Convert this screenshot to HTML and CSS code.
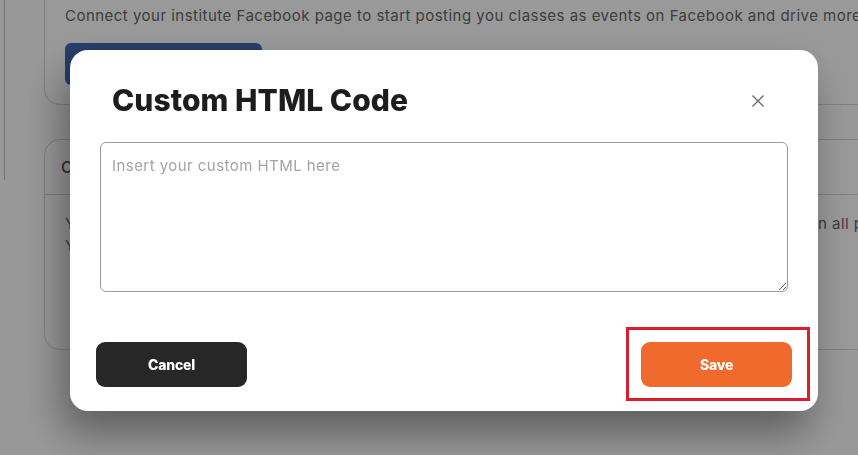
FILE: index.html
```html
<!DOCTYPE html>
<html lang="en">
<head>
<meta charset="utf-8">
<title>Custom HTML Code</title>
<link rel="stylesheet" href="styles.css">
</head>
<body>
<div class="page">
  <aside class="sidebar"></aside>
  <main class="main">
    <section class="card card-top">
      <p class="card-text">Connect your institute Facebook page to start posting you classes as events on Facebook and drive more</p>
      <button class="fb-btn" type="button">Connect Facebook</button>
    </section>
    <section class="card card-code">
      <header class="card-head">Custom HTML Code</header>
      <div class="card-body">
        <p class="line"><span class="lead">Your custom HTML code will be inserted into your website and it will be loaded o</span>n all pages</p>
        <p class="line">You can use it to add analytics, chat widgets and other tools.</p>
      </div>
    </section>
  </main>
</div>

<div class="overlay">
  <div class="modal" role="dialog" aria-labelledby="modal-title">
    <div class="modal-head">
      <h2 class="modal-title" id="modal-title">Custom HTML Code</h2>
      <button class="close-btn" type="button" aria-label="Close">
        <svg width="14" height="14" viewBox="0 0 14 14" aria-hidden="true"><path d="M1.5 1.5 L12.5 12.5 M12.5 1.5 L1.5 12.5" stroke="#6a6a6a" stroke-width="1.4" fill="none"/></svg>
      </button>
    </div>
    <textarea class="code-input" placeholder="Insert your custom HTML here"></textarea>
    <div class="modal-actions">
      <button class="btn btn-cancel" type="button">Cancel</button>
      <div class="save-wrap">
        <button class="btn btn-save" type="button">Save</button>
        <span class="highlight"></span>
      </div>
    </div>
  </div>
</div>
</body>
</html>
```

FILE: styles.css
```css
* { box-sizing: border-box; }

html, body {
  margin: 0;
  padding: 0;
  width: 858px;
  height: 455px;
  overflow: hidden;
  background: #fdfdfd;
  font-family: Inter, "Noto Sans", sans-serif;
}

.page {
  display: flex;
  align-items: flex-start;
}

.sidebar {
  width: 5px;
  height: 180px;
  border-right: 1px solid #c4c4c4;
  flex: none;
}

.main {
  padding-left: 39px;
  display: flex;
  flex-direction: column;
  gap: 34px;
}

.card {
  width: 900px;
  background: #fff;
  border: 1px solid #d6d6d6;
  border-radius: 16px;
}

.card-top {
  border-top: none;
  border-radius: 0 0 16px 16px;
  padding: 6px 20px 18px;
  height: 105px;
}

.card-text {
  margin: 0;
  font-size: 15px;
  line-height: 20px;
  color: #666;
  letter-spacing: 0.48px;
  white-space: nowrap;
}

.fb-btn {
  margin-top: 17px;
  width: 197px;
  height: 42px;
  border: none;
  border-radius: 6px;
  background: #4267b2;
  color: #fff;
  font: 700 14px Inter, sans-serif;
}

.card-code {
  height: 211px;
}

.card-head {
  height: 55px;
  padding: 0 16px;
  display: flex;
  align-items: center;
  font-size: 16px;
  font-weight: 500;
  color: #555;
  border-bottom: 1px solid #d6d6d6;
}

.card-body {
  padding: 18px 20px;
}

.line {
  margin: 0;
  font-size: 15px;
  line-height: 22px;
  color: #666;
  letter-spacing: 0.48px;
  white-space: nowrap;
}

.lead {
  display: inline-block;
  width: 753px;
  overflow: hidden;
  vertical-align: top;
}

/* Overlay + modal */
.overlay {
  position: fixed;
  inset: 0;
  background: rgba(0, 0, 0, 0.4);
  padding: 50px 0 0 70px;
}

.modal {
  width: 748px;
  height: 361px;
  background: #fff;
  border-radius: 18px;
  box-shadow: -8px 22px 40px rgba(0, 0, 0, 0.38);
  padding: 32px 26px 24px 26px;
  display: flex;
  flex-direction: column;
}

.modal-head {
  display: flex;
  align-items: center;
  justify-content: space-between;
  padding: 0 27px 0 16px;
}

.modal-title {
  margin: 0;
  font-size: 30px;
  line-height: 36px;
  font-weight: 800;
  color: #1d1d1d;
  letter-spacing: 0.05px;
}

.close-btn {
  width: 14px;
  height: 14px;
  padding: 0;
  border: none;
  background: none;
  display: flex;
  margin-top: 2px;
}

.code-input {
  margin: 24px 4px 0;
  height: 150px;
  border: 1px solid #9a9a9a;
  border-radius: 6px;
  padding: 13px 11px;
  font: 400 15px/20px Inter, sans-serif;
  letter-spacing: 0.45px;
  color: #333;
  resize: both;
  outline: none;
}

.code-input::placeholder {
  color: #a3a3a3;
}

.modal-actions {
  margin-top: 50px;
  display: flex;
  justify-content: space-between;
}

.btn {
  width: 151px;
  height: 45px;
  border: none;
  border-radius: 9px;
  color: #fff;
  font: 800 14px Inter, sans-serif;
  letter-spacing: -0.2px;
}

.btn-cancel {
  background: #272727;
}

.btn-save {
  background: #f0692d;
}

.save-wrap {
  position: relative;
}

.highlight {
  position: absolute;
  top: -15px;
  left: -15px;
  right: -18px;
  bottom: -14px;
  border: 3px solid #d91f2b;
  pointer-events: none;
}
```
